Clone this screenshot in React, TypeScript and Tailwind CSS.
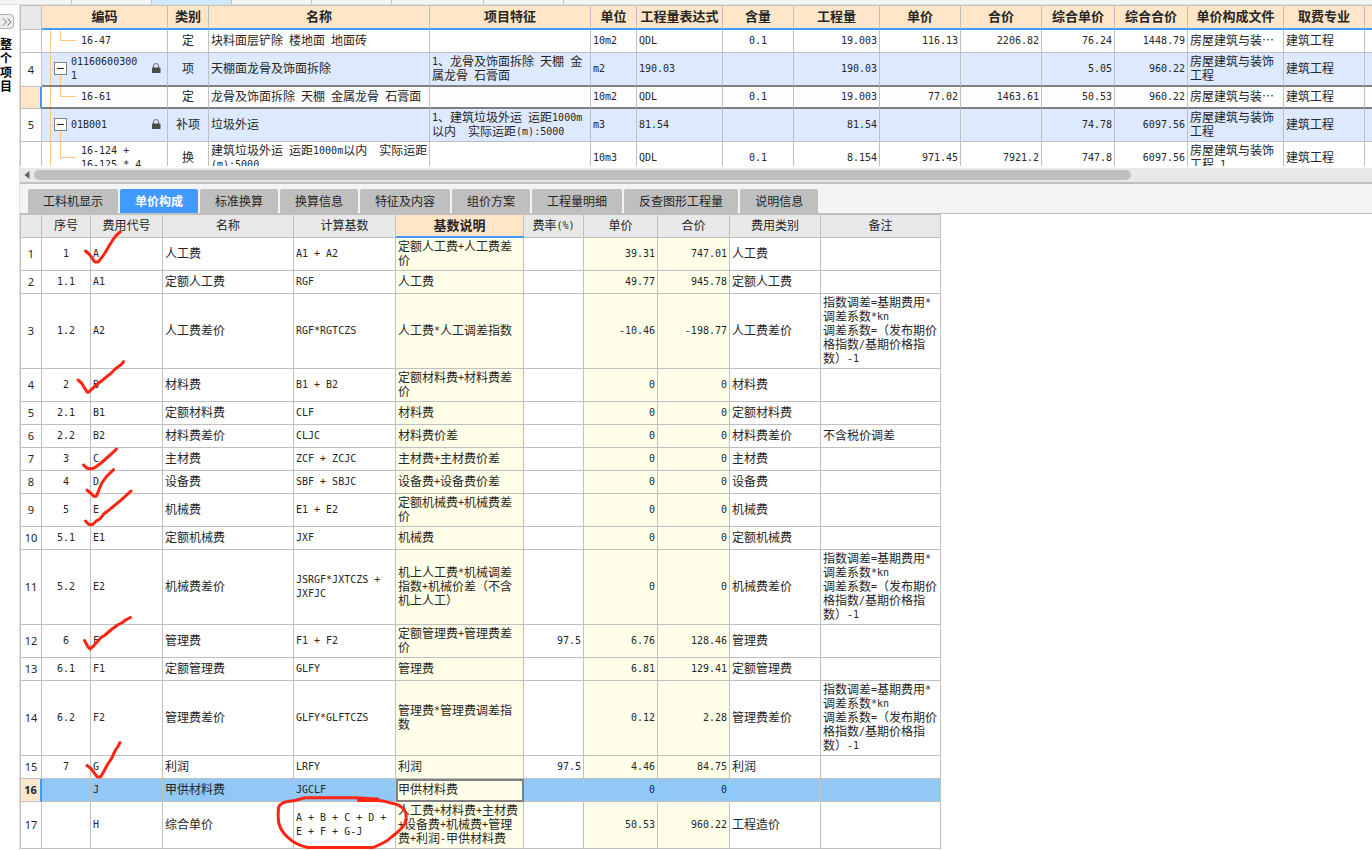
import { useState } from "react";
import type { ReactNode } from "react";

const UPPER_COLS = [
  "w-[22px]", "w-[126px]", "w-[41px]", "w-[221px]", "w-[161px]", "w-[46px]", "w-[86px]", "w-[71px]",
  "w-[86px]", "w-[81px]", "w-[81px]", "w-[73px]", "w-[73px]", "w-[96px]", "w-[81px]", "",
];

const UPPER_HEADERS = [
  "编码", "类别", "名称", "项目特征", "单位", "工程量表达式", "含量",
  "工程量", "单价", "合价", "综合单价", "综合合价", "单价构成文件", "取费专业",
];

type UpperRow = { no: string; code: string; parent?: boolean; selected?: boolean; cells: string[] };

const UPPER_ROWS: UpperRow[] = [
  {
    no: "", code: "16-47",
    cells: ["定", "块料面层铲除 楼地面 地面砖", "", "10m2", "QDL", "0.1", "19.003", "116.13", "2206.82", "76.24", "1448.79", "房屋建筑与装…", "建筑工程"],
  },
  {
    no: "4", code: "01160600300\n1", parent: true,
    cells: ["项", "天棚面龙骨及饰面拆除", "1、龙骨及饰面拆除 天棚 金\n属龙骨 石膏面", "m2", "190.03", "", "190.03", "", "", "5.05", "960.22", "房屋建筑与装饰\n工程", "建筑工程"],
  },
  {
    no: "", code: "16-61", selected: true,
    cells: ["定", "龙骨及饰面拆除 天棚 金属龙骨 石膏面", "", "10m2", "QDL", "0.1", "19.003", "77.02", "1463.61", "50.53", "960.22", "房屋建筑与装…", "建筑工程"],
  },
  {
    no: "5", code: "01B001", parent: true,
    cells: ["补项", "垃圾外运", "1、建筑垃圾外运 运距1000m\n以内  实际运距(m):5000", "m3", "81.54", "", "81.54", "", "", "74.78", "6097.56", "房屋建筑与装饰\n工程", "建筑工程"],
  },
  {
    no: "", code: "16-124 +\n16-125 * 4",
    cells: ["换", "建筑垃圾外运 运距1000m以内  实际运距\n(m):5000", "", "10m3", "QDL", "0.1", "8.154", "971.45", "7921.2", "747.8", "6097.56", "房屋建筑与装饰\n工程 1", "建筑工程"],
  },
];

const UPPER_ALIGN = [
  "text-center", "text-left", "text-left", "text-left", "text-left", "text-center", "text-right",
  "text-right", "text-right", "text-right", "text-right", "text-left", "text-left",
];

const TABS = ["工料机显示", "单价构成", "标准换算", "换算信息", "特征及内容", "组价方案", "工程量明细", "反查图形工程量", "说明信息"];

const LOWER_COLS = [
  "w-[22px]", "w-[49px]", "w-[72px]", "w-[131px]", "w-[102px]", "w-[128px]",
  "w-[60px]", "w-[74px]", "w-[72px]", "w-[91px]", "w-[120px]",
];

const LOWER_HEADERS = ["序号", "费用代号", "名称", "计算基数", "基数说明", "费率(%)", "单价", "合价", "费用类别", "备注"];

const LOWER_ALIGN = [
  "text-center", "text-left", "text-left", "text-left", "text-left",
  "text-right", "text-right", "text-right", "text-left", "text-left",
];

const NOTE = "指数调差=基期费用*\n调差系数*kn\n调差系数=（发布期价\n格指数/基期价格指\n数）-1";

const LOWER_ROWS = [
  ["1", "A", "人工费", "A1 + A2", "定额人工费+人工费差\n价", "", "39.31", "747.01", "人工费", ""],
  ["1.1", "A1", "定额人工费", "RGF", "人工费", "", "49.77", "945.78", "定额人工费", ""],
  ["1.2", "A2", "人工费差价", "RGF*RGTCZS", "人工费*人工调差指数", "", "-10.46", "-198.77", "人工费差价", NOTE],
  ["2", "B", "材料费", "B1 + B2", "定额材料费+材料费差\n价", "", "0", "0", "材料费", ""],
  ["2.1", "B1", "定额材料费", "CLF", "材料费", "", "0", "0", "定额材料费", ""],
  ["2.2", "B2", "材料费差价", "CLJC", "材料费价差", "", "0", "0", "材料费差价", "不含税价调差"],
  ["3", "C", "主材费", "ZCF + ZCJC", "主材费+主材费价差", "", "0", "0", "主材费", ""],
  ["4", "D", "设备费", "SBF + SBJC", "设备费+设备费价差", "", "0", "0", "设备费", ""],
  ["5", "E", "机械费", "E1 + E2", "定额机械费+机械费差\n价", "", "0", "0", "机械费", ""],
  ["5.1", "E1", "定额机械费", "JXF", "机械费", "", "0", "0", "定额机械费", ""],
  ["5.2", "E2", "机械费差价", "JSRGF*JXTCZS +\nJXFJC", "机上人工费*机械调差\n指数+机械价差（不含\n机上人工）", "", "0", "0", "机械费差价", NOTE],
  ["6", "F", "管理费", "F1 + F2", "定额管理费+管理费差\n价", "97.5", "6.76", "128.46", "管理费", ""],
  ["6.1", "F1", "定额管理费", "GLFY", "管理费", "", "6.81", "129.41", "定额管理费", ""],
  ["6.2", "F2", "管理费差价", "GLFY*GLFTCZS", "管理费*管理费调差指\n数", "", "0.12", "2.28", "管理费差价", NOTE],
  ["7", "G", "利润", "LRFY", "利润", "97.5", "4.46", "84.75", "利润", ""],
  ["", "J", "甲供材料费", "JGCLF", "甲供材料费", "", "0", "0", "", ""],
  ["", "H", "综合单价", "A + B + C + D +\nE + F + G-J", "人工费+材料费+主材费\n+设备费+机械费+管理\n费+利润-甲供材料费", "", "50.53", "960.22", "工程造价", ""],
];

const SELECTED_ROW = 15;

// Latin runs are set half as wide as a Chinese character
function Mixed({ text }: { text: string }) {
  const parts = text.split(/([\x20-\x7e]+)/).filter(Boolean);
  return (
    <>
      {parts.map((part, i) =>
        /^[\x20-\x7e]/.test(part) ? (
          <span key={i} className="align-[1px] font-['DejaVu_Sans_Mono',monospace] text-[10px] leading-none">{part}</span>
        ) : (
          part
        )
      )}
    </>
  );
}

function Cols({ widths }: { widths: string[] }) {
  return (
    <colgroup>
      {widths.map((w, i) => (
        <col key={i} className={w} />
      ))}
    </colgroup>
  );
}

function RowNumber({ children, selected }: { children?: ReactNode; selected?: boolean }) {
  return (
    <th
      scope="row"
      className={`border-b border-l border-[#c0c0c0] p-0 text-center font-['Noto_Sans',sans-serif] text-[11px] ${
        selected ? "border-r-2 border-r-[#409aff] bg-[#ffe6c8] font-bold" : "border-r bg-white font-normal"
      }`}
    >
      {children}
    </th>
  );
}

function LockIcon() {
  return (
    <svg className="h-3 w-2.5 shrink-0" viewBox="0 0 10 12" aria-hidden="true">
      <path d="M2.5 6V4a2.5 2.5 0 0 1 5 0v2" fill="none" stroke="#808080" strokeWidth="1.200" />
      <rect x="1" y="5.5" width="8.500" height="5.500" rx="0.5" fill="#4a4a4a" />
    </svg>
  );
}

function TreeCell({ row, border }: { row: UpperRow; border: string }) {
  return (
    <td className={`relative border-r p-0 ${border}`}>
      <span className="absolute inset-y-0 left-2 border-l border-[#ffc980]" />
      {row.parent ? (
        <>
          <span className="absolute top-1/2 left-2 w-1 border-t border-[#ffc980]" />
          <span className="absolute top-1/2 bottom-0 left-[18px] border-l border-[#ffc980]" />
          <div className="relative flex items-center pr-1.5 pb-0.5 pl-3">
            <button
              type="button"
              aria-label="折叠"
              className="flex h-[13px] w-[13px] shrink-0 items-center justify-center border border-[#808080] bg-white"
            >
              <span className="w-[7px] border-t border-[#262626]" />
            </button>
            <span className="flex-1 pl-1 whitespace-pre"><Mixed text={row.code} /></span>
            <LockIcon />
          </div>
        </>
      ) : (
        <>
          <span className="absolute top-0 left-[18px] h-1/2 w-4 border-b border-l border-[#ffc980]" />
          <div className="pt-px pb-[3px] pl-[39px] whitespace-pre"><Mixed text={row.code} /></div>
        </>
      )}
    </td>
  );
}

function QuotaTable() {
  return (
    <div className="h-40 overflow-hidden">
      <table className="w-full table-fixed border-separate border-spacing-0">
        <Cols widths={UPPER_COLS} />
        <thead>
          <tr className="h-6">
            <th className="border-x border-b border-[#c0c0c0] bg-[#e8e8e8] p-0" />
            {UPPER_HEADERS.map((h) => (
              <th key={h} scope="col" className="border-r border-b-2 border-r-[#c0c0c0] border-b-[#409aff] bg-[#ffe6c8] px-0 pb-0.5 text-[13px] font-bold whitespace-nowrap">
                {h}
              </th>
            ))}
            <th className="border-b-2 border-[#409aff] bg-[#ffe6c8] p-0" />
          </tr>
        </thead>
        <tbody>
          {UPPER_ROWS.map((row, r) => {
            // the current row is framed by a heavier line above and below
            const thick = row.selected || UPPER_ROWS[r + 1]?.selected;
            const border = thick ? "border-b-2 border-r-[#c0c0c0] border-b-[#808080]" : "border-b border-[#c0c0c0]";
            return (
              <tr
                key={row.code}
                className={`${row.selected ? "h-[22px] bg-[#fdfdfd]" : "h-[23px]"} ${row.parent ? "bg-[#dde9fe]" : ""}`}
              >
                <RowNumber selected={row.selected}>{row.no}</RowNumber>
                <TreeCell row={row} border={border} />
                {row.cells.map((cell, i) => (
                  <td key={i} className={`border-r px-0.5 pt-px pb-[3px] whitespace-pre ${UPPER_ALIGN[i]} ${border}`}>
                    <Mixed text={cell} />
                  </td>
                ))}
                <td className={`p-0 ${border}`} />
              </tr>
            );
          })}
        </tbody>
      </table>
    </div>
  );
}

function ScrollBar() {
  return (
    <div className="mt-0.5 flex h-3.5 items-center bg-[#e8e8e8] pl-1">
      <svg className="mr-1 h-2 w-1.5 shrink-0" viewBox="0 0 6 8" aria-hidden="true">
        <path d="M5.5 0v8L0.5 4z" fill="#606068" />
      </svg>
      <div className="flex-1">
        <div className="h-2.5 w-[82%] rounded-full bg-[#bfbfbf]" />
      </div>
    </div>
  );
}

// Hand-drawn red ink over the fee codes and the formula
function RedMarks() {
  return (
    <svg
      className="pointer-events-none absolute top-0 left-0 h-[635px] w-[921px] overflow-visible"
      viewBox="20 214 921 635"
      fill="none"
      stroke="#fb2514"
      strokeWidth="3"
      strokeLinecap="round"
      strokeLinejoin="round"
      aria-hidden="true"
    >
      <path d="M85.5 251l4 3.5 5 7.2q2 .8 4 0l5-6.500 8.500-14 4-5.500 4.500-4" />
      <path d="M78 380l3.500 3 5.500 9 1.500.2 10-9 4-3 8.500-7 5-5 5-3.500 2.500-3" />
      <path d="M83.500 465q2.500 3 5 3.700 4 .3 6-1l6-4.200 8-7 8-7.300" />
      <path d="M87 490l4 3.500 3 3 2.500-.5 2-5 3-7.500 5-7 7-6.800" />
      <path d="M85.500 521l3 3.200q2 .8 4.500 0l3-3 4-2.500 4-5 6-4.500 11-9 5-4.500 5-4.500" />
      <path d="M84.500 640.500l3 5.500 2.500 3 3.500-3 8-9 3-1.500 7-6 6-4.500 5-2.500 3-2.500 5-2.500" />
      <path d="M87 765.500l4 3 6 8.200 3.500.3 3-5 4-7.500 4-6 4-8.500 2.500-3.500 2-4" />
      <path d="M358.500 800.500h19.500c6 0 9 1.500 15 3 6 1 9 3.500 11 6 3 4.500 2.500 9.500 1 14-2 5-8 9-14 14-5 5-10 6.500-18 10h-65c-10-2-15-5-20-10-5-4-9-11-9.500-16-.5-5-.5-9 0-14 2-5 6-5.500 13-6.500 6-.5 9-2.500 14-3.200h50c8 .4 14 1.200 22.500 1.200" />
    </svg>
  );
}

function FeeTable() {
  return (
    <div className="relative overflow-x-clip">
      <table className="w-[921px] table-fixed border-separate border-spacing-0 border-t border-[#c0c0c0]">
        <Cols widths={LOWER_COLS} />
        <thead>
          <tr className="h-[23px] bg-[#e8e8e8]">
            <th className="border-x border-b border-[#c0c0c0] p-0" />
            {LOWER_HEADERS.map((h, i) => (
              <th
                key={h}
                scope="col"
                className={`border-r border-r-[#c0c0c0] px-0 pb-0.5 whitespace-nowrap ${
                  i === 4 ? "border-b-2 border-b-[#409aff] bg-[#ffe6c8] text-[13px] font-bold" : "border-b border-b-[#c0c0c0] font-normal"
                }`}
              >
                <Mixed text={h} />
              </th>
            ))}
          </tr>
        </thead>
        <tbody>
          {LOWER_ROWS.map((row, r) => {
            const selected = r === SELECTED_ROW;
            return (
              <tr key={r} className={`h-[23px] ${selected ? "bg-[#91c8f6]" : ""}`}>
                <RowNumber selected={selected}>{r + 1}</RowNumber>
                {row.map((cell, i) => {
                  const focused = selected && i === 4;
                  const yellow = focused || (!selected && (i === 4 || i === 6 || i === 7));
                  return (
                    <td
                      key={i}
                      className={`border-r border-b border-[#c0c0c0] px-0.5 pt-px pb-[3px] whitespace-pre ${LOWER_ALIGN[i]} ${
                        yellow ? "bg-[#ffffe9]" : ""
                      } ${focused ? "outline-2 -outline-offset-2 outline-[#808080]" : ""}`}
                    >
                      <Mixed text={cell} />
                    </td>
                  );
                })}
              </tr>
            );
          })}
        </tbody>
      </table>
      <RedMarks />
    </div>
  );
}

export default function App() {
  const [active, setActive] = useState("单价构成");

  return (
    <div className="flex min-h-screen flex-col overflow-hidden bg-white font-['Noto_Sans_CJK_SC',sans-serif] text-[12px] leading-[14px] text-[#262626]">
      {/* Bottom edge of the document tabs */}
      <div className="flex h-[5px] border-b border-[#e0e0e0] bg-[#f4f4f4]">
        <div className="w-[72px] border-r border-[#c0c0c0]" />
        <div className="w-20 border-r border-[#c0c0c0]" />
        <div className="w-20 border-r border-[#c0c0c0] bg-[#cde8ff]" />
        <div className="w-20 border-r border-[#c0c0c0]" />
        <div className="w-20 border-r border-[#c0c0c0]" />
        <div className="w-[92px] border-r border-[#c0c0c0]" />
        <div className="w-20 border-r border-[#c0c0c0]" />
      </div>

      <div className="flex flex-1">
        <aside className="w-5 shrink-0 border-r border-[#e0e0e0] pt-[9px]">
          <button
            type="button"
            aria-label="展开"
            className="flex h-[15px] w-3.5 items-center justify-center rounded-r-sm border border-l-0 border-[#b8b8b8] bg-[#ececec]"
          >
            <svg className="h-2 w-2.5" viewBox="0 0 10 8" fill="none" stroke="#707070" aria-hidden="true">
              <path d="M1 0.500l3.500 3.500-3.500 3.500M5.500 0.500l3.500 3.500-3.500 3.500" />
            </svg>
          </button>
          <div className="mt-2 w-3 text-[12px] leading-[14px] font-bold break-all text-black">整个项目</div>
        </aside>

        <main className="min-w-0 flex-1">
          <section className="border-t border-[#c0c0c0]">
            <QuotaTable />
            <ScrollBar />
          </section>

          <section>
            <div role="tablist" className="flex gap-0.5 border-t-2 border-b border-[#c0c0c0] bg-[#f4f4f4] pt-[5px] pl-2">
              {TABS.map((tab) => (
                <button
                  key={tab}
                  type="button"
                  role="tab"
                  aria-selected={tab === active}
                  onClick={() => setActive(tab)}
                  className={`h-6 rounded-t-xs px-[15px] whitespace-nowrap ${
                    tab === active ? "bg-[#409aff] font-bold text-white" : "bg-[#bfbfbf]"
                  }`}
                >
                  {tab}
                </button>
              ))}
            </div>
            <FeeTable />
          </section>
        </main>
      </div>
    </div>
  );
}
